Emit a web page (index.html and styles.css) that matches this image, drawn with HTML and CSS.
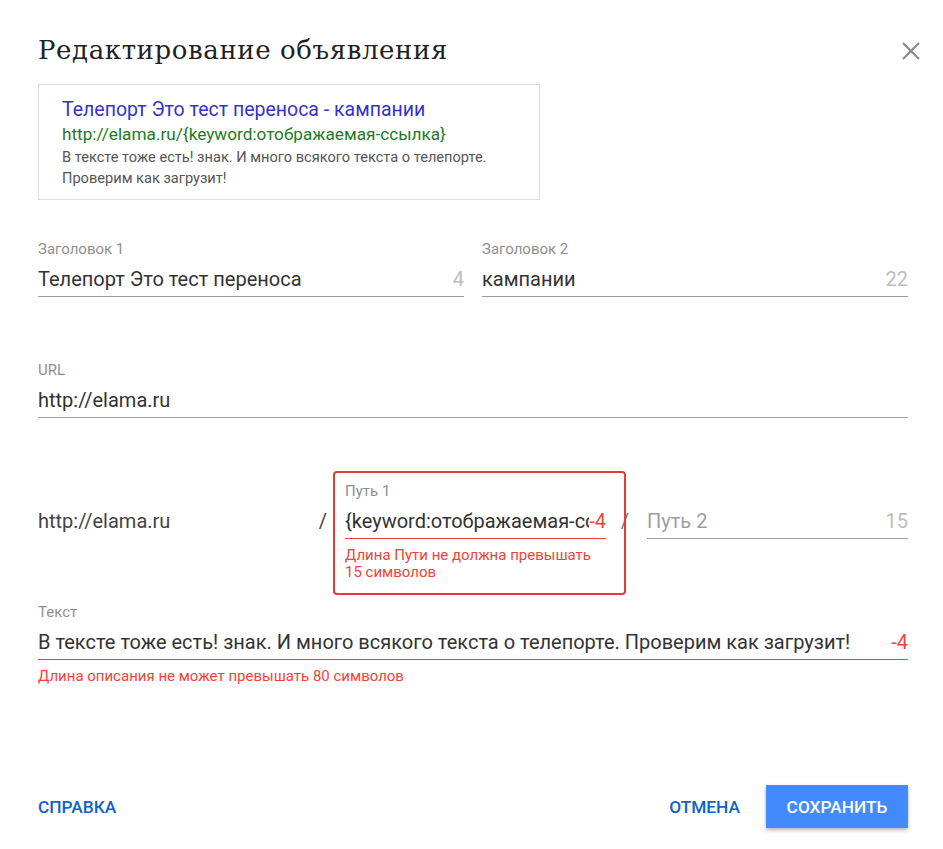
FILE: index.html
```html
<!DOCTYPE html>
<html lang="ru">
<head>
    <meta charset="UTF-8">
    <meta name="viewport" content="width=device-width, initial-scale=1.0">
    <title>Редактирование объявления</title>
    <link rel="stylesheet" href="styles.css">
</head>
<body>
<div class="dialog">
    <div class="dialog-header">
        <h1 class="dialog-title">Редактирование объявления</h1>
        <button class="close" aria-label="Закрыть">
            <svg width="18" height="18" viewBox="0 0 18 18">
                <path d="M1 1 L17 17 M17 1 L1 17" stroke="#8c8c8c" stroke-width="2.2" fill="none"/>
            </svg>
        </button>
    </div>

    <div class="preview">
        <div class="preview-title">Телепорт Это тест переноса - кампании</div>
        <div class="preview-url">http://elama.ru/{keyword:отображаемая-ссылка}</div>
        <div class="preview-text">В тексте тоже есть! знак. И много всякого текста о телепорте. Проверим как загрузит!</div>
    </div>

    <div class="row two-cols">
        <div class="field">
            <div class="field-label">Заголовок 1</div>
            <div class="field-input">
                <span class="field-value">Телепорт Это тест переноса</span>
                <span class="counter">4</span>
            </div>
        </div>
        <div class="field">
            <div class="field-label">Заголовок 2</div>
            <div class="field-input">
                <span class="field-value">кампании</span>
                <span class="counter">22</span>
            </div>
        </div>
    </div>

    <div class="row">
        <div class="field">
            <div class="field-label">URL</div>
            <div class="field-input">
                <span class="field-value">http://elama.ru</span>
            </div>
        </div>
    </div>

    <div class="row path-row">
        <div class="path-prefix">http://elama.ru</div>
        <div class="slash">/</div>
        <div class="field path-active">
            <div class="field-label">Путь 1</div>
            <div class="field-input invalid">
                <span class="field-value clip">{keyword:отображаемая-ссылка}</span>
                <span class="counter error tight">-4</span>
            </div>
            <div class="field-error path-error">Длина Пути не должна превышать 15 символов</div>
        </div>
        <div class="slash second">/</div>
        <div class="field">
            <div class="field-label"></div>
            <div class="field-input">
                <span class="field-value placeholder">Путь 2</span>
                <span class="counter">15</span>
            </div>
        </div>
    </div>

    <div class="row">
        <div class="field">
            <div class="field-label">Текст</div>
            <div class="field-input invalid">
                <span class="field-value">В тексте тоже есть! знак. И много всякого текста о телепорте. Проверим как загрузит!</span>
                <span class="counter error">-4</span>
            </div>
            <div class="field-error">Длина описания не может превышать 80 символов</div>
        </div>
    </div>

    <div class="dialog-footer">
        <button class="flat-btn">Справка</button>
        <div class="footer-actions">
            <button class="flat-btn">Отмена</button>
            <button class="raised-btn">Сохранить</button>
        </div>
    </div>
</div>
</body>
</html>
```

FILE: styles.css
```css
body {
    margin: 0;
    background-color: #fff;
    font-family: Roboto, "Noto Sans", sans-serif;
    color: #333;
}

.dialog {
    width: 943px;
    height: 849px;
    box-sizing: border-box;
    padding: 30px 35px 0 38px;
}

.dialog-header {
    display: flex;
    justify-content: space-between;
    align-items: flex-start;
}

.dialog-title {
    margin: 0;
    font-family: "DejaVu Serif", serif;
    font-size: 26px;
    line-height: 40px;
    font-weight: normal;
    color: #212121;
    letter-spacing: 0.6px;
}

.close {
    border: none;
    background: none;
    padding: 0;
    margin: 12px -13px 0 0;
    width: 20px;
    height: 20px;
    cursor: pointer;
}

.preview {
    width: 502px;
    height: 116px;
    box-sizing: border-box;
    margin-top: 14px;
    border: 1px solid #dcdcdc;
    padding: 12px 16px 0 23px;
}

.preview-title {
    font-size: 19.5px;
    line-height: 25px;
    color: #3434c8;
}

.preview-url {
    font-size: 17.2px;
    line-height: 25px;
    color: #1d7a1d;
}

.preview-text {
    font-size: 14.6px;
    line-height: 21px;
    color: #555;
}

.row {
    margin-top: 41px;
}

.row + .row {
    margin-top: 65px;
}

.two-cols {
    display: grid;
    grid-template-columns: 1fr 1fr;
    gap: 18px;
}

.field {
    position: relative;
    min-width: 0;
}

.field-label {
    height: 16px;
    font-size: 15px;
    line-height: 16px;
    color: #8f8f8f;
}

.field-input {
    display: flex;
    align-items: center;
    margin-top: 10px;
    padding-bottom: 5px;
    border-bottom: 1px solid #9e9e9e;
    font-size: 20px;
    line-height: 24px;
}

.field-input.invalid {
    border-bottom-color: #f44336;
}

.field-value {
    flex: 1;
    white-space: nowrap;
    color: #333;
}

.field-value.clip {
    overflow: hidden;
}

.field-value.placeholder {
    color: #9e9e9e;
}

.counter {
    margin-left: 6px;
    color: #bdbdbd;
}

.counter.tight {
    margin-left: 0;
}

.counter.error {
    color: #f44336;
}

.field-error {
    margin-top: 8px;
    font-size: 15px;
    line-height: 17px;
    color: #f44336;
}

.path-row {
    display: grid;
    grid-template-columns: 1fr 37px 261px 41px 261px;
    align-items: end;
}

.path-prefix,
.slash {
    font-size: 20px;
    line-height: 24px;
    padding-bottom: 6px;
    color: #444;
}

.slash {
    padding-right: 18px;
    text-align: right;
}

.slash.second {
    padding-right: 18px;
    color: #777;
}

.path-active::before {
    content: "";
    position: absolute;
    left: -12px;
    right: -20px;
    top: -12px;
    height: 124px;
    border: 2px solid #e53935;
    border-radius: 4px;
    box-sizing: border-box;
    pointer-events: none;
}

.path-error {
    position: absolute;
    left: 0;
    right: 0;
    top: 100%;
}

.dialog-footer {
    display: flex;
    justify-content: space-between;
    align-items: center;
    margin-top: 100px;
}

.footer-actions {
    display: flex;
    align-items: center;
    gap: 26px;
}

.flat-btn,
.raised-btn {
    border: none;
    background: none;
    padding: 0;
    font-family: Roboto, "Noto Sans", sans-serif;
    font-size: 17.3px;
    font-weight: 500;
    text-transform: uppercase;
    cursor: pointer;
}

.flat-btn {
    color: #0d63c8;
}

.raised-btn {
    width: 142px;
    height: 43px;
    background-color: #448aff;
    color: #fff;
    box-shadow: 0 2px 4px rgba(0, 0, 0, 0.3);
}
```
